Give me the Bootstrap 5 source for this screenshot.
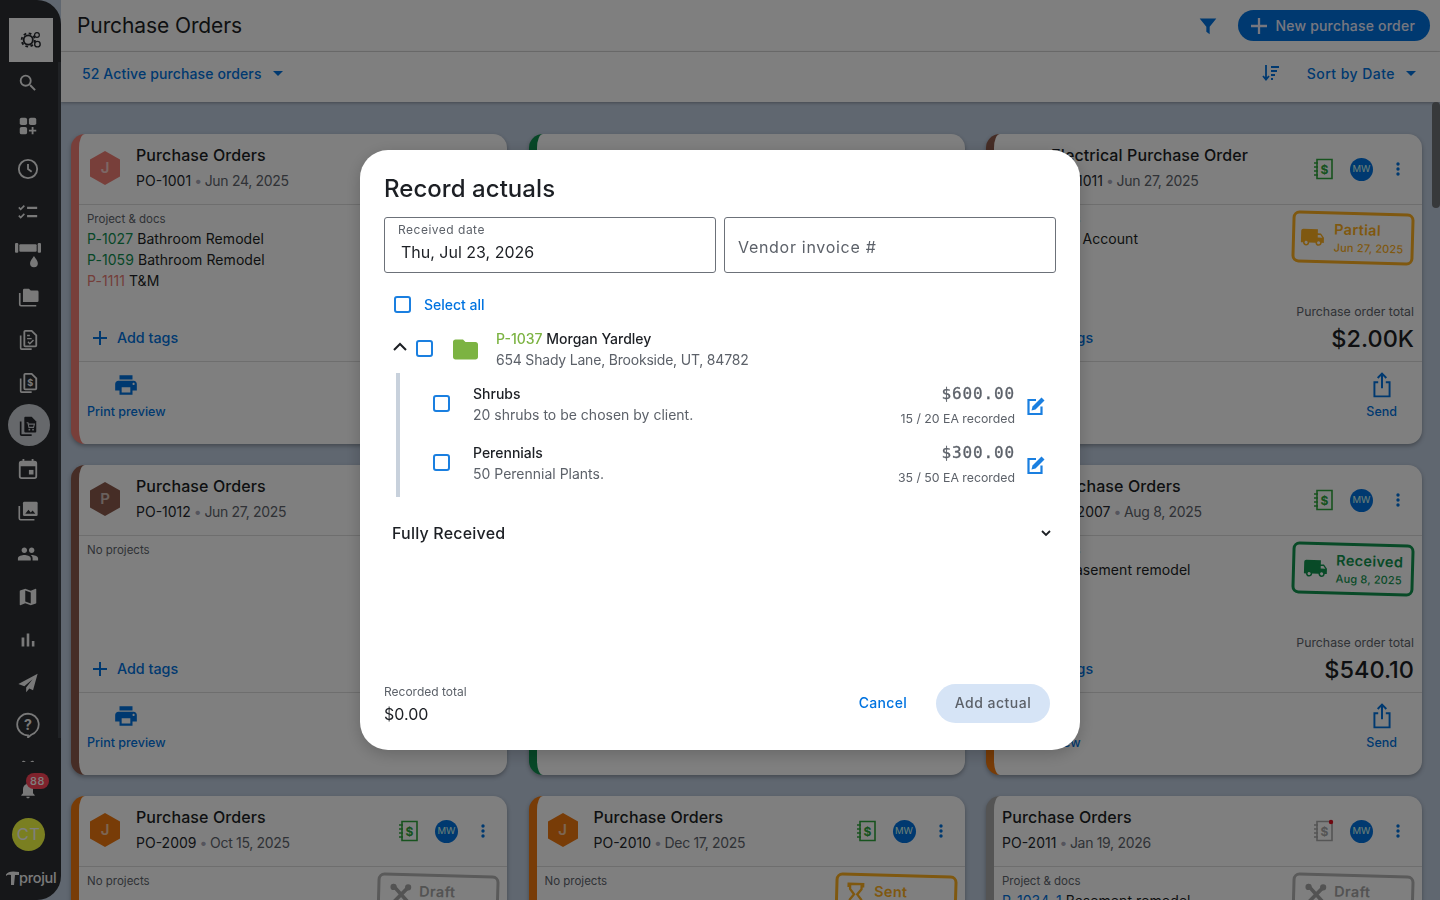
<!doctype html>
<html lang="en">
<head>
<meta charset="utf-8">
<title>Purchase Orders</title>
<link href="https://cdn.jsdelivr.net/npm/bootstrap@5.3.0/dist/css/bootstrap.min.css" rel="stylesheet">
<style>
html,body{height:100%}
body{font-family:Inter,"Noto Sans","Liberation Sans",sans-serif;background:#c0cee0;overflow:hidden;color:#1c1f24;font-size:14px}
.app{height:100vh}
.rail{width:61px;flex:none;background:#2c2f33;border-radius:0 24px 24px 0;color:#f2f2f2;position:relative;z-index:3;height:100vh}
.rail-top{width:44px;height:44px;margin:18px 0 0 9px;background:#fff;color:#24272c}
.rail-nav{height:700px;overflow:hidden;flex:none;background:linear-gradient(#41454b,#41454b) right top/3px 676px no-repeat}
.rail-item{height:42.8px;flex:none;width:56px}
.rail-item svg{width:22px;height:22px}
.rail-item svg.wide{width:26px;height:26px}
.rail-on{position:relative;color:#24272c}
.rail-on::before{content:"";position:absolute;left:8px;top:0;width:42px;height:42px;border-radius:50%;background:#ccd0d6}
.rail-on svg{position:relative}
.bell{height:40px;width:56px;margin-top:8px;position:relative}
.bell-count{position:absolute;left:26px;top:3px;background:#ff4458;color:#fff;border-radius:9px;font-size:11px;line-height:16px;padding:0 4px;font-weight:500;letter-spacing:.5px}
.me{width:33px;height:33px;border-radius:50%;background:#f4ff42;color:#fff;margin:8px 0 0 12px;font-size:16.5px;letter-spacing:.3px}
.brand{margin:17px 0 0 6px;color:#f5f5f5;font-size:14.5px;font-weight:500;line-height:20px;letter-spacing:-.3px}
.main{min-width:0;position:relative;overflow:hidden;height:100vh}
.bar-a{height:52px;background:#fff;border-bottom:1px solid #ddd;padding:0 10px 0 16px}
.bar-a h1{font-size:21px;font-weight:400;margin:0;letter-spacing:-.1px}
.bar-b{height:50px;background:#fff;padding:0 24px 8px 21px;box-shadow:0 1px 3px rgba(0,0,0,.3);position:relative;z-index:1}
.blue{color:#0073e0}
.lnk{font-weight:500;color:#0073e0;letter-spacing:.12px}
.lnk-wide{letter-spacing:.45px;margin-left:27px}
.caret{width:10px;height:5px;fill:#0073e0;margin-left:11px}
.funnel{margin-right:4px}
.new-po.btn{background:#0073e0;color:#eef;border-radius:16px;height:31px;padding:0 15px 0 13px;font-weight:500;font-size:14px;letter-spacing:.2px;border:0}
.new-po.btn:hover{background:#0073e0;color:#eef}
.board{display:grid;grid-template-columns:repeat(3,436px);gap:21px 21.5px;padding:32px 0 0 10px}
.po.card{height:310px;border:0;border-left:8px solid #999;border-radius:14px;box-shadow:0 2px 4px rgba(0,0,0,.3);overflow:hidden}
.po-head{height:71px;border-bottom:1px solid #ddd;padding:0 22px 2px 11px;flex:none}
.po-title{font-size:16px;font-weight:500;line-height:20px;letter-spacing:.1px;white-space:nowrap}
.po-sub{font-size:14px;line-height:20px;margin-top:6px;color:#60656d;white-space:nowrap;letter-spacing:-.32px}
.po-sub b{font-weight:400;color:#24272c;letter-spacing:0}
.po-sub i{font-style:normal;color:#aab;margin:0 3px;font-size:14px}
.hex{width:30px;height:34px;margin-right:16px;color:#fff;position:relative;flex:none}
.hex svg{position:absolute;inset:0;width:30px;height:34px}
.hex span{position:relative;font-weight:600;font-size:15px;opacity:.62}
.po-doc{width:21px;height:24px;margin-top:2px}
.mw{width:23px;height:23px;border-radius:50%;background:#0073e0;color:#dfe;font-size:9.5px;margin:2px 23px 0 16px;letter-spacing:.1px}
.kebab{width:4px;height:14px;color:#0073e0;margin-top:2px}
.po-main{flex:1 1 auto;padding:7px 8px 7px 8px;min-height:0;border-bottom:1px solid #ddd}
.cap{font-size:11.5px;line-height:14px;color:#60656d;margin:0 0 2px}
.ln{font-size:14px;line-height:21px;white-space:nowrap;letter-spacing:.07px}
.g1{color:#0f8f4f}.r1{color:#e87c74}.b1{color:#0073e0}
.tags{margin-top:auto;font-weight:500;font-size:14.3px;padding-left:6px;line-height:22px;color:#0073e0;margin-bottom:5px}
.tags svg{width:14px;height:14px;margin-right:10px}
.stamp{width:122px;height:52px;border:3px solid #999;border-radius:7px;transform:rotate(1.6deg);padding-left:8px;margin-top:0;color:#999}
.stamp svg{width:25px;height:25px;margin-right:8px;flex:none}
.stamp-t{font-weight:600;font-size:14.5px;line-height:18px;letter-spacing:.3px}
.stamp-d{font-weight:500;font-size:11px;line-height:14px;letter-spacing:.15px;margin-top:2px;white-space:nowrap}
.stamp-up{align-items:flex-start!important;padding-top:6px}
.stamp-up svg{margin-right:6px}
.amber{border-color:#ffb020;color:#ffb020;padding-left:5px}
.amber svg{margin-right:9px}
.stamp-up.amber svg{margin-right:6px}
.green{border-color:#10954f;color:#10954f}
.grey{border-color:#b4b4b4;color:#a6a6a6}
.tot-l{font-size:12.3px;line-height:14px;color:#60656d;text-align:right;white-space:nowrap}
.tot-v{font-size:23.5px;line-height:30px;font-weight:500;text-align:right;margin-top:5px}
.po-foot{height:82px;flex:none;padding:10px 8px 0;color:#0073e0}
.act{font-size:12.5px;font-weight:500;text-align:center}
.act svg{width:26px;height:26px;display:block;margin:0 auto 5px}
.act-send{padding:0 17px 0 15px}
.thumb{position:absolute;right:0;top:102px;width:8px;height:106px;background:#6f7276;border-radius:4px;z-index:1}
.veil{position:fixed;inset:0;z-index:1050;background:rgba(0,0,0,.5)}
.dlg.modal-content{width:720px;height:600px;border:0;border-radius:28px;padding:24px 30px 26px 24px;box-shadow:0 4px 16px rgba(0,0,0,.2);overflow:hidden;background:#fff;color:#1c1f24}
.dlg h2{font-size:24px;font-weight:500;line-height:30px;margin:0 0 13px;letter-spacing:.05px}
.fld.form-control{height:56px;border:1px solid #6c7179;border-radius:3px;padding:0 13px;width:332px;flex:none;background:#fff;color:#1c1f24}
.fld small{display:block;font-size:12px;line-height:15px;margin-top:4px;color:#5c6169;letter-spacing:.5px}
.fld div{font-size:16px;line-height:20px;margin:5px 0 0 3px;font-weight:400}
.fld span{font-size:16px;letter-spacing:.7px;color:#5c6169;line-height:58px}
.box.form-check-input{width:17px;height:17px;border:2px solid #1a7fe0;border-radius:3px;margin:0;flex:none;background-color:#fff;float:none}
.sel{margin:22px 0 0 10px;height:18px}
.sel span{margin-left:13px;font-weight:500;color:#0073e0;font-size:14px}
.proj{margin:15px 0 0 9px;height:42px}
.proj svg.chev{width:14px;height:9px;margin:-5px 9px 0 0;flex:none}
.proj .box.form-check-input{margin-top:-2px}
.proj svg.fo{width:25px;height:23px;margin:0 18px 0 20px;flex:none}
.proj .t2{letter-spacing:-.2px}
.t1{font-weight:500;line-height:21px;white-space:nowrap}
.t2{color:#5c6169;line-height:21px;white-space:nowrap}
.lime{color:#7cb342}
.lines{margin:3px 0 0 12px;border-left:4px solid #c8d1dc;padding:0 4px 0 33px;height:124px}
.li{height:59px;padding-top:10px}
.li .box.form-check-input{margin:12px 23px 0 0}
.amt{font-family:"DejaVu Sans Mono","Liberation Mono",monospace;font-size:16px;color:#5c6169;line-height:20px;letter-spacing:.85px;text-align:right;margin-top:1px;-webkit-text-stroke:.3px #5c6169}
.rec{font-size:12.3px;color:#5c6169;line-height:15px;margin-top:7px;text-align:right;white-space:nowrap}
.pen{width:20px;height:20px;margin-left:11px;margin-top:13px;flex:none}
.fr{margin:26px -1px 0 8px;font-size:16px;font-weight:500;line-height:20px;letter-spacing:.2px}
.dlg-end{margin-top:auto}
.dlg-end small{font-size:12px;color:#5c6169;display:block;line-height:15px;margin-top:1px}
.dlg-end div.val{font-size:16px;line-height:20px;margin-top:5px}
.btn-x.btn{color:#0073e0;font-weight:500;font-size:14px;letter-spacing:.3px;padding:0 0 2px;border:0;margin-right:29px}
.btn-y.btn{background:#d6e4f6;color:#5c6169;border:0;border-radius:20px;width:114px;height:39px;font-weight:500;font-size:14px;letter-spacing:.5px;padding:0 0 2px}
.sym{position:absolute;width:0;height:0;overflow:hidden}
.glyph{font-family:Inter,sans-serif;font-weight:700;fill:currentColor;text-anchor:middle}
</style>
</head>
<body>
<svg class="sym" aria-hidden="true">
<symbol id="i-gears" viewBox="0 0 24 24"><circle cx="9" cy="12" r="5" fill="none" stroke="currentColor" stroke-width="2"/><circle cx="9" cy="12" r="7.2" fill="none" stroke="currentColor" stroke-width="2" stroke-dasharray="3 2.7"/><circle cx="18.5" cy="6.5" r="2.6" fill="none" stroke="currentColor" stroke-width="1.3"/><circle cx="19" cy="16.5" r="3" fill="none" stroke="currentColor" stroke-width="1.5"/></symbol>
<symbol id="i-search" viewBox="0 0 24 24"><path fill="currentColor" d="M15.5 14h-.79l-.28-.27A6.471 6.471 0 0 0 16 9.5 6.5 6.5 0 1 0 9.5 16c1.61 0 3.09-.59 4.23-1.57l.27.28v.79l5 4.99L20.49 19l-4.99-5zm-6 0C7.01 14 5 11.99 5 9.5S7.01 5 9.5 5 14 7.01 14 9.5 11.99 14 9.5 14z"/></symbol>
<symbol id="i-apps" viewBox="0 0 24 24"><g fill="currentColor"><rect x="3" y="3" width="8" height="8" rx="2"/><rect x="13" y="3" width="8" height="8" rx="2"/><rect x="3" y="13" width="8" height="8" rx="2"/><path d="M16 13h2v3h3v2h-3v3h-2v-3h-3v-2h3z"/></g></symbol>
<symbol id="i-clock" viewBox="0 0 24 24"><circle cx="12" cy="12" r="10" fill="none" stroke="currentColor" stroke-width="2"/><path d="M12 6.5V12l4 3" fill="none" stroke="currentColor" stroke-width="2"/></symbol>
<symbol id="i-tasks" viewBox="0 0 24 24"><path d="M2 7l2 2 4-4M2 16l2 2 4-4" fill="none" stroke="currentColor" stroke-width="1.8"/><path d="M11 7.5h11M11 16.5h11" stroke="currentColor" stroke-width="2.4"/></symbol>
<symbol id="i-pipe" viewBox="0 0 24 24"><g fill="currentColor"><rect x="0" y="1" width="3" height="9" rx="1"/><rect x="4" y="2" width="16" height="7" rx="1"/><rect x="21" y="1" width="3" height="9" rx="1"/><path d="M17.5 13c2 3 3.6 4.7 3.6 6.7a3.6 3.6 0 0 1-7.2 0c0-2 1.6-3.7 3.6-6.7z"/></g></symbol>
<symbol id="i-folders" viewBox="0 0 24 24"><path fill="currentColor" d="M8 3h5l2 2h7a1.5 1.5 0 0 1 1.5 1.5V16a1.5 1.5 0 0 1-1.5 1.5H6.5V4.5A1.5 1.5 0 0 1 8 3z"/><path d="M3 7.5V20a1.5 1.5 0 0 0 1.5 1.5H21" fill="none" stroke="currentColor" stroke-width="1.8"/></symbol>
<symbol id="i-doccheck" viewBox="0 0 24 24"><path d="M9 2h7l5 5v11a1 1 0 0 1-1 1H9a1 1 0 0 1-1-1V3a1 1 0 0 1 1-1z" fill="none" stroke="currentColor" stroke-width="2"/><path d="M11 7h3M11 10.5h5M12 14l2 2 4-4" fill="none" stroke="currentColor" stroke-width="1.6"/><path d="M4 7v14a1 1 0 0 0 1 1h11" fill="none" stroke="currentColor" stroke-width="1.8"/></symbol>
<symbol id="i-docblank" viewBox="0 0 24 24"><path d="M9 2h7l5 5v11a1 1 0 0 1-1 1H9a1 1 0 0 1-1-1V3a1 1 0 0 1 1-1z" fill="none" stroke="currentColor" stroke-width="2"/><path d="M4 7v14a1 1 0 0 0 1 1h11" fill="none" stroke="currentColor" stroke-width="1.8"/></symbol>
<symbol id="i-doccart" viewBox="0 0 24 24"><path fill="currentColor" d="M9 2h7l5 5v11a1 1 0 0 1-1 1H9a1 1 0 0 1-1-1V3a1 1 0 0 1 1-1z"/><path d="M10.5 8.5h1.5l1 5h5l1-3.5h-6.5" fill="none" stroke="#ccd0d6" stroke-width="1.2"/><circle cx="13.5" cy="16" r="1" fill="#ccd0d6"/><circle cx="17.5" cy="16" r="1" fill="#ccd0d6"/><path d="M4 7v14a1 1 0 0 0 1 1h11" fill="none" stroke="currentColor" stroke-width="1.8"/></symbol>
<symbol id="i-cal" viewBox="0 0 24 24"><path d="M7 1v4M17 1v4" stroke="currentColor" stroke-width="2"/><rect x="3" y="4" width="18" height="18" rx="2" fill="none" stroke="currentColor" stroke-width="2"/><rect x="3" y="4" width="18" height="5" fill="currentColor"/><rect x="13" y="13" width="5" height="5" fill="currentColor"/></symbol>
<symbol id="i-img" viewBox="0 0 24 24"><path fill="currentColor" d="M8 2h13a1.5 1.5 0 0 1 1.5 1.5V16a1.5 1.5 0 0 1-1.5 1.5H8A1.5 1.5 0 0 1 6.5 16V3.5A1.5 1.5 0 0 1 8 2z"/><path d="M9 15l3.5-4.5 2.5 3 2-2 3 3.5z" fill="#2c2f33"/><path d="M2.5 6.5V20A1.5 1.5 0 0 0 4 21.5h15" fill="none" stroke="currentColor" stroke-width="1.8"/></symbol>
<symbol id="i-people" viewBox="0 0 24 24"><path fill="currentColor" d="M16 11c1.66 0 2.99-1.34 2.99-3S17.66 5 16 5c-1.66 0-3 1.34-3 3s1.34 3 3 3zm-8 0c1.66 0 2.99-1.34 2.99-3S9.66 5 8 5C6.34 5 5 6.34 5 8s1.34 3 3 3zm0 2c-2.33 0-7 1.17-7 3.5V19h14v-2.5c0-2.33-4.67-3.5-7-3.5zm8 0c-.29 0-.62.02-.97.05 1.16.84 1.97 1.97 1.97 3.45V19h6v-2.5c0-2.33-4.67-3.5-7-3.5z"/></symbol>
<symbol id="i-map" viewBox="0 0 24 24"><path fill="currentColor" d="M20.5 3l-.16.03L15 5.1 9 3 3.36 4.9c-.21.07-.36.25-.36.48V20.5c0 .28.22.5.5.5l.16-.03L9 18.9l6 2.1 5.64-1.9c.21-.07.36-.25.36-.48V3.5c0-.28-.22-.5-.5-.5zM15 19l-6-2.11V5l6 2.11V19z"/></symbol>
<symbol id="i-bars" viewBox="0 0 24 24"><path fill="currentColor" d="M5 9.2h3V19H5zM10.6 5h2.8v14h-2.8zm5.6 8H19v6h-2.8z"/></symbol>
<symbol id="i-send" viewBox="0 0 24 24"><path fill="currentColor" d="M22.5 2 1.5 13l6.5 2.5L17 8l-7 9v5l3.5-4 4 2z"/></symbol>
<symbol id="i-bubble" viewBox="0 0 24 24"><path d="M12 1.5a10 10 0 0 1 3 19.500l-3 2.500v-2a10 10 0 0 1 0-20z" fill="none" stroke="currentColor" stroke-width="1.6"/></symbol>
<symbol id="i-gift" viewBox="0 0 24 24"><path fill="currentColor" d="M1 8h22v2H1zM6 8c-2-3 1-5 3-3l3 3 3-3c2-2 5 0 3 3z"/><rect x="3" y="10" width="18" height="12" fill="currentColor"/></symbol>
<symbol id="i-bell" viewBox="0 0 24 24"><path fill="currentColor" d="M12 22c1.1 0 2-.9 2-2h-4c0 1.1.89 2 2 2zm6-6v-5c0-3.07-1.64-5.64-4.5-6.32V4c0-.83-.67-1.5-1.5-1.5s-1.5.67-1.5 1.5v.68C7.63 5.36 6 7.92 6 11v5l-2 2v1h16v-1l-2-2z"/></symbol>
<symbol id="i-print" viewBox="0 0 24 24"><path fill="currentColor" d="M19 8H5c-1.66 0-3 1.34-3 3v6h4v4h12v-4h4v-6c0-1.66-1.34-3-3-3zm-3 11H8v-5h8v5zm3-7c-.55 0-1-.45-1-1s.45-1 1-1 1 .45 1 1-.45 1-1 1zm-1-9H6v4h12V3z"/></symbol>
<symbol id="i-share" viewBox="0 0 24 24"><path d="M8.5 9.5H5v13h14v-13h-3.500M12 15V2M8 5.500 12 1.500l4 4" fill="none" stroke="currentColor" stroke-width="1.8"/></symbol>
<symbol id="i-plus" viewBox="0 0 14 14"><path d="M7 0v14M0 7h14" stroke="currentColor" stroke-width="2"/></symbol>
<symbol id="i-truck" viewBox="0 0 24 24"><path fill="currentColor" d="M20 8h-3V4H3c-1.1 0-2 .9-2 2v11h2c0 1.66 1.34 3 3 3s3-1.34 3-3h6c0 1.66 1.34 3 3 3s3-1.34 3-3h2v-5l-3-4zM6 18.500c-.83 0-1.500-.67-1.500-1.500s.67-1.500 1.500-1.500 1.500.67 1.500 1.500-.67 1.500-1.500 1.500zm13.500-9l1.96 2.500H17V9.500h2.500zm-1.500 9c-.83 0-1.500-.67-1.500-1.500s.67-1.500 1.500-1.500 1.500.67 1.500 1.500-.67 1.500-1.500 1.500z"/></symbol>
<symbol id="i-tools" viewBox="0 0 24 24"><path d="M4 3l17 18M20 4 5 20" stroke="currentColor" stroke-width="3.5"/><circle cx="5" cy="5" r="3" fill="currentColor"/><circle cx="19" cy="5" r="3" fill="currentColor"/></symbol>
<symbol id="i-hour" viewBox="0 0 24 24"><path d="M5 2h14v2h-1.500v3L13.500 12l4 5v3H19v2H5v-2h1.500v-3l4-5-4-5V4H5z" fill="none" stroke="currentColor" stroke-width="2.2"/></symbol>
<symbol id="i-ledger" viewBox="0 0 21 24"><path d="M4 2.500h15v19H4z" fill="none" stroke="currentColor" stroke-width="1.6"/><path d="M1 6h4M1 10h4M1 14h4M1 18h4" stroke="currentColor" stroke-width="1.4"/></symbol>
<symbol id="i-dots" viewBox="0 0 4 14"><circle cx="2" cy="2" r="1.7" fill="currentColor"/><circle cx="2" cy="7" r="1.7" fill="currentColor"/><circle cx="2" cy="12" r="1.7" fill="currentColor"/></symbol>
<symbol id="i-hex" viewBox="0 0 30 34"><path fill="currentColor" d="M15 0 30 8.500v17L15 34 0 25.500v-17z"/></symbol>
<symbol id="i-pen" viewBox="0 0 20 20"><path d="M10 4H2.500v14h13v-7.500" fill="none" stroke="#1a7fe0" stroke-width="2.2"/><path fill="#1a7fe0" d="M15.500 1.500l3 3-9 9-4 1 1-4z"/></symbol>
</svg>

<div class="app d-flex">
  <aside class="rail d-flex flex-column">
    <div class="rail-top d-flex align-items-center justify-content-center"><svg width="22" height="22"><use href="#i-gears"/></svg></div>
    <nav class="rail-nav d-flex flex-column">
      <div class="rail-item d-flex align-items-center justify-content-center"><svg><use href="#i-search"/></svg></div>
      <div class="rail-item d-flex align-items-center justify-content-center"><svg><use href="#i-apps"/></svg></div>
      <div class="rail-item d-flex align-items-center justify-content-center"><svg><use href="#i-clock"/></svg></div>
      <div class="rail-item d-flex align-items-center justify-content-center"><svg><use href="#i-tasks"/></svg></div>
      <div class="rail-item d-flex align-items-center justify-content-center"><svg class="wide"><use href="#i-pipe"/></svg></div>
      <div class="rail-item d-flex align-items-center justify-content-center"><svg><use href="#i-folders"/></svg></div>
      <div class="rail-item d-flex align-items-center justify-content-center"><svg><use href="#i-doccheck"/></svg></div>
      <div class="rail-item d-flex align-items-center justify-content-center"><svg viewBox="0 0 24 24"><use href="#i-docblank"/><text class="glyph" x="14.500" y="15" font-size="10">$</text></svg></div>
      <div class="rail-item rail-on d-flex align-items-center justify-content-center"><svg><use href="#i-doccart"/></svg></div>
      <div class="rail-item d-flex align-items-center justify-content-center"><svg><use href="#i-cal"/></svg></div>
      <div class="rail-item d-flex align-items-center justify-content-center"><svg><use href="#i-img"/></svg></div>
      <div class="rail-item d-flex align-items-center justify-content-center"><svg><use href="#i-people"/></svg></div>
      <div class="rail-item d-flex align-items-center justify-content-center"><svg><use href="#i-map"/></svg></div>
      <div class="rail-item d-flex align-items-center justify-content-center"><svg><use href="#i-bars"/></svg></div>
      <div class="rail-item d-flex align-items-center justify-content-center"><svg><use href="#i-send"/></svg></div>
      <div class="rail-item d-flex align-items-center justify-content-center"><svg class="wide" viewBox="0 0 24 24"><use href="#i-bubble"/><text class="glyph" x="12" y="16.500" font-size="13">?</text></svg></div>
      <div class="rail-item d-flex align-items-center justify-content-center"><svg><use href="#i-gift"/></svg></div>
    </nav>
    <div class="bell d-flex align-items-center justify-content-center"><svg width="20" height="20"><use href="#i-bell"/></svg><span class="bell-count">88</span></div>
    <div class="me d-flex align-items-center justify-content-center">CT</div>
    <div class="brand d-flex align-items-center"><svg width="13" height="14" viewBox="0 0 13 14"><path fill="currentColor" d="M0 3.500C2 0 7 0 13 1v3H9l-1 10H5V4C3 3.500 1.500 3.500 0 5z"/></svg><span>projul</span></div>
  </aside>

  <main class="main flex-grow-1">
    <header class="bar-a d-flex align-items-center">
      <h1>Purchase Orders</h1>
      <svg class="ms-auto blue funnel" width="20" height="20" viewBox="0 0 24 24"><path fill="currentColor" d="M2 3h20l-8 10v9l-4-3v-6z"/></svg>
      <button class="new-po btn d-flex align-items-center ms-3"><svg width="16" height="16" viewBox="0 0 14 14" class="me-2"><use href="#i-plus"/></svg>New purchase order</button>
    </header>
    <div class="bar-b d-flex align-items-center">
      <span class="lnk">52 Active purchase orders</span>
      <svg class="caret" viewBox="0 0 10 5"><path d="M0 0h10L5 5z"/></svg>
      <svg class="ms-auto blue" width="18" height="18" viewBox="0 0 18 18"><path d="M4 1v14M1 12l3 3.500L7 12" fill="none" stroke="currentColor" stroke-width="1.8"/><path d="M9 3h8M9 7h6M9 11h4M9 15h2" stroke="currentColor" stroke-width="1.8"/></svg>
      <span class="lnk lnk-wide">Sort by Date</span>
      <svg class="caret" viewBox="0 0 10 5"><path d="M0 0h10L5 5z"/></svg>
    </div>
    <div class="thumb"></div>

    <section class="board">
      <article class="po card" style="border-left-color:#f07f75">
        <div class="po-head d-flex align-items-center">
          <div class="hex d-flex align-items-center justify-content-center" style="color:#f07f75"><svg><use href="#i-hex"/></svg><span class="text-white">J</span></div>
          <div><div class="po-title">Purchase Orders</div><div class="po-sub"><b>PO-1001</b><i>•</i>Jun 24, 2025</div></div>
        </div>
        <div class="po-main d-flex justify-content-between">
          <div class="d-flex flex-column"><p class="cap">Project &amp; docs</p><div class="ln"><span class="g1">P-1027</span> Bathroom Remodel</div><div class="ln"><span class="g1">P-1059</span> Bathroom Remodel</div><div class="ln"><span class="r1">P-1111</span> T&amp;M</div><div class="tags d-flex align-items-center"><svg><use href="#i-plus"/></svg>Add tags</div></div>
        </div>
        <div class="po-foot d-flex justify-content-between"><div class="act"><svg><use href="#i-print"/></svg>Print preview</div></div>
      </article>

      <article class="po card" style="border-left-color:#0f8f4f">
        <div class="po-head d-flex align-items-center">
          <div class="hex d-flex align-items-center justify-content-center" style="color:#0f8f4f"><svg><use href="#i-hex"/></svg></div>
          <div><div class="po-title">Purchase Orders</div></div>
        </div>
        <div class="po-main"></div><div class="po-foot"></div>
      </article>

      <article class="po card" style="border-left-color:#8c5a4c">
        <div class="po-head d-flex align-items-center">
          <div class="hex d-flex align-items-center justify-content-center" style="color:#8c5a4c"><svg><use href="#i-hex"/></svg><span class="text-white">E</span></div>
          <div><div class="po-title">Electrical Purchase Order</div><div class="po-sub"><b>PO-1011</b><i>•</i>Jun 27, 2025</div></div>
          <svg class="po-doc ms-auto" viewBox="0 0 21 24" style="color:#2fa63c"><use href="#i-ledger"/><text class="glyph" x="11.500" y="17" font-size="12">$</text></svg><div class="mw d-flex align-items-center justify-content-center">MW</div><svg class="kebab"><use href="#i-dots"/></svg>
        </div>
        <div class="po-main d-flex justify-content-between">
          <div class="d-flex flex-column"><p class="cap">Project &amp; docs</p><div class="ln"><span class="g1">P-1009</span> Job Account</div><div class="tags d-flex align-items-center"><svg><use href="#i-plus"/></svg>Add tags</div></div>
          <div class="d-flex flex-column align-items-end"><div class="stamp amber d-flex align-items-center"><svg><use href="#i-truck"/></svg><div><div class="stamp-t">Partial</div><div class="stamp-d">Jun 27, 2025</div></div></div><div class="tot-l mt-auto">Purchase order total</div><div class="tot-v">$2.00K</div></div>
        </div>
        <div class="po-foot d-flex justify-content-between"><div class="act"></div><div class="act act-send"><svg><use href="#i-share"/></svg>Send</div></div>
      </article>

      <article class="po card" style="border-left-color:#8c5a4c">
        <div class="po-head d-flex align-items-center">
          <div class="hex d-flex align-items-center justify-content-center" style="color:#8c5a4c"><svg><use href="#i-hex"/></svg><span class="text-white">P</span></div>
          <div><div class="po-title">Purchase Orders</div><div class="po-sub"><b>PO-1012</b><i>•</i>Jun 27, 2025</div></div>
        </div>
        <div class="po-main d-flex flex-column"><p class="cap">No projects</p><div class="tags d-flex align-items-center"><svg><use href="#i-plus"/></svg>Add tags</div></div>
        <div class="po-foot d-flex justify-content-between"><div class="act"><svg><use href="#i-print"/></svg>Print preview</div></div>
      </article>

      <article class="po card" style="border-left-color:#0f8f4f">
        <div class="po-head"></div><div class="po-main"></div><div class="po-foot"></div>
      </article>

      <article class="po card" style="border-left-color:#f0780f">
        <div class="po-head d-flex align-items-center">
          <div class="hex d-flex align-items-center justify-content-center" style="color:#f0780f"><svg><use href="#i-hex"/></svg><span class="text-white">J</span></div>
          <div><div class="po-title">Purchase Orders</div><div class="po-sub"><b>PO-2007</b><i>•</i>Aug 8, 2025</div></div>
          <svg class="po-doc ms-auto" viewBox="0 0 21 24" style="color:#2fa63c"><use href="#i-ledger"/><text class="glyph" x="11.500" y="17" font-size="12">$</text></svg><div class="mw d-flex align-items-center justify-content-center">MW</div><svg class="kebab"><use href="#i-dots"/></svg>
        </div>
        <div class="po-main d-flex justify-content-between">
          <div class="d-flex flex-column"><p class="cap">Project &amp; docs</p><div class="ln"><span class="b1">P-1034-1</span> Basement remodel</div><div class="tags d-flex align-items-center"><svg><use href="#i-plus"/></svg>Add tags</div></div>
          <div class="d-flex flex-column align-items-end"><div class="stamp green d-flex align-items-center"><svg><use href="#i-truck"/></svg><div><div class="stamp-t">Received</div><div class="stamp-d">Aug 8, 2025</div></div></div><div class="tot-l mt-auto">Purchase order total</div><div class="tot-v">$540.10</div></div>
        </div>
        <div class="po-foot d-flex justify-content-between"><div class="act"><svg><use href="#i-print"/></svg>Print preview</div><div class="act act-send"><svg><use href="#i-share"/></svg>Send</div></div>
      </article>

      <article class="po card" style="border-left-color:#f0780f">
        <div class="po-head d-flex align-items-center">
          <div class="hex d-flex align-items-center justify-content-center" style="color:#f0780f"><svg><use href="#i-hex"/></svg><span class="text-white">J</span></div>
          <div><div class="po-title">Purchase Orders</div><div class="po-sub"><b>PO-2009</b><i>•</i>Oct 15, 2025</div></div>
          <svg class="po-doc ms-auto" viewBox="0 0 21 24" style="color:#2fa63c"><use href="#i-ledger"/><text class="glyph" x="11.500" y="17" font-size="12">$</text></svg><div class="mw d-flex align-items-center justify-content-center">MW</div><svg class="kebab"><use href="#i-dots"/></svg>
        </div>
        <div class="po-main d-flex justify-content-between">
          <p class="cap">No projects</p>
          <div class="stamp stamp-up grey d-flex align-items-center"><svg><use href="#i-tools"/></svg><div class="stamp-t">Draft</div></div>
        </div>
      </article>

      <article class="po card" style="border-left-color:#f0780f">
        <div class="po-head d-flex align-items-center">
          <div class="hex d-flex align-items-center justify-content-center" style="color:#f0780f"><svg><use href="#i-hex"/></svg><span class="text-white">J</span></div>
          <div><div class="po-title">Purchase Orders</div><div class="po-sub"><b>PO-2010</b><i>•</i>Dec 17, 2025</div></div>
          <svg class="po-doc ms-auto" viewBox="0 0 21 24" style="color:#2fa63c"><use href="#i-ledger"/><text class="glyph" x="11.500" y="17" font-size="12">$</text></svg><div class="mw d-flex align-items-center justify-content-center">MW</div><svg class="kebab"><use href="#i-dots"/></svg>
        </div>
        <div class="po-main d-flex justify-content-between">
          <p class="cap">No projects</p>
          <div class="stamp stamp-up amber d-flex align-items-center"><svg><use href="#i-hour"/></svg><div class="stamp-t">Sent</div></div>
        </div>
      </article>

      <article class="po card" style="border-left-color:#a8a8a8">
        <div class="po-head d-flex align-items-center" style="padding-left:8px">
          <div><div class="po-title">Purchase Orders</div><div class="po-sub"><b>PO-2011</b><i>•</i>Jan 19, 2026</div></div>
          <svg class="po-doc ms-auto" viewBox="0 0 21 24" style="color:#aaa"><use href="#i-ledger"/><text class="glyph" x="11.500" y="17" font-size="12">$</text><circle cx="18" cy="3" r="2.200" fill="#e01020"/></svg><div class="mw d-flex align-items-center justify-content-center">MW</div><svg class="kebab"><use href="#i-dots"/></svg>
        </div>
        <div class="po-main d-flex justify-content-between">
          <div><p class="cap">Project &amp; docs</p><div class="ln"><span class="b1">P-1034-1</span> Basement remodel</div></div>
          <div class="stamp stamp-up grey d-flex align-items-center"><svg><use href="#i-tools"/></svg><div class="stamp-t">Draft</div></div>
        </div>
      </article>
    </section>
  </main>
</div>

<div class="veil d-flex align-items-center justify-content-center">
  <div class="dlg modal-content d-flex flex-column">
    <h2>Record actuals</h2>
    <div class="d-flex gap-2">
      <div class="fld form-control"><small>Received date</small><div>Thu, Jul 23, 2026</div></div>
      <div class="fld form-control"><span>Vendor invoice #</span></div>
    </div>
    <div class="sel d-flex align-items-center"><input type="checkbox" class="box form-check-input" aria-label="Select all"><span>Select all</span></div>
    <div class="proj d-flex align-items-center">
      <svg class="chev" viewBox="0 0 14 9"><path d="M1 8l6-6 6 6" fill="none" stroke="#1c1f24" stroke-width="2"/></svg>
      <input type="checkbox" class="box form-check-input" aria-label="P-1037">
      <svg class="fo" viewBox="2 3 20 18"><path fill="#7cb342" d="M10 4H4c-1.1 0-1.99.9-1.99 2L2 18c0 1.1.9 2 2 2h16c1.1 0 2-.9 2-2V8c0-1.1-.9-2-2-2h-8l-2-2z"/></svg>
      <div><div class="t1"><span class="lime">P-1037</span> Morgan Yardley</div><div class="t2">654 Shady Lane, Brookside, UT, 84782</div></div>
    </div>
    <div class="lines">
      <div class="li d-flex">
        <input type="checkbox" class="box form-check-input" aria-label="Shrubs">
        <div><div class="t1">Shrubs</div><div class="t2">20 shrubs to be chosen by client.</div></div>
        <div class="ms-auto"><div class="amt">$600.00</div><div class="rec">15 / 20 EA recorded</div></div>
        <svg class="pen"><use href="#i-pen"/></svg>
      </div>
      <div class="li d-flex">
        <input type="checkbox" class="box form-check-input" aria-label="Perennials">
        <div><div class="t1">Perennials</div><div class="t2">50 Perennial Plants.</div></div>
        <div class="ms-auto"><div class="amt">$300.00</div><div class="rec">35 / 50 EA recorded</div></div>
        <svg class="pen"><use href="#i-pen"/></svg>
      </div>
    </div>
    <div class="fr d-flex align-items-center justify-content-between"><span>Fully Received</span><svg width="10" height="7" viewBox="0 0 10 7"><path d="M1 1l4 4 4-4" fill="none" stroke="#1c1f24" stroke-width="1.8"/></svg></div>
    <div class="dlg-end d-flex align-items-center">
      <div><small>Recorded total</small><div class="val">$0.00</div></div>
      <button class="btn btn-x ms-auto">Cancel</button>
      <button class="btn btn-y">Add actual</button>
    </div>
  </div>
</div>
<script src="https://cdn.jsdelivr.net/npm/bootstrap@5.3.0/dist/js/bootstrap.bundle.min.js"></script>
</body>
</html>
